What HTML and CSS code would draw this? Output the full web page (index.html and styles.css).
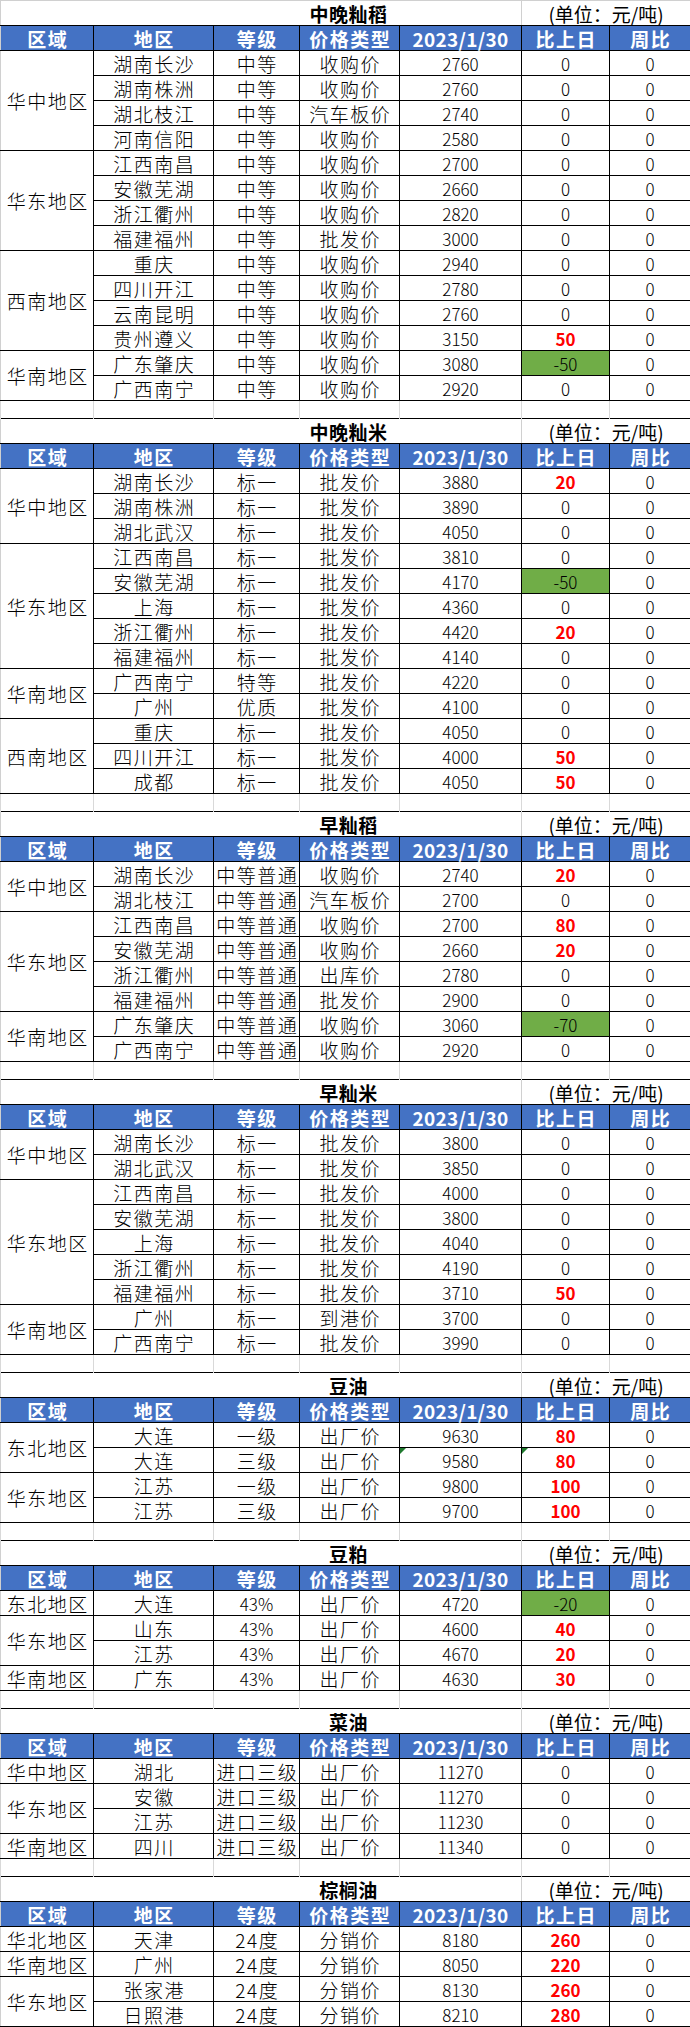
FILE: index.html
```html
<!DOCTYPE html>
<html lang="zh">
<head>
<meta charset="utf-8">
<title>价格表</title>
<link rel="stylesheet" href="styles.css">
</head>
<body>
<table class="sheet">
<colgroup><col class="c1"><col class="c2"><col class="c3"><col class="c4"><col class="c5"><col class="c6"><col class="c7"></colgroup>
<tbody>
<!-- 中晚籼稻 -->
<tr class="ti first"><td colspan="5" class="tt">中晚籼稻</td><td colspan="2" class="unit">(单位：元/吨)</td></tr>
<tr class="hd"><td class="rg">区域</td><td>地区</td><td>等级</td><td>价格类型</td><td class="hn">2023/1/30</td><td>比上日</td><td>周比</td></tr>
<tr class="d"><td rowspan="4" class="rg">华中地区</td><td>湖南长沙</td><td>中等</td><td>收购价</td><td class="n">2760</td><td class="n">0</td><td class="n">0</td></tr>
<tr class="d"><td>湖南株洲</td><td>中等</td><td>收购价</td><td class="n">2760</td><td class="n">0</td><td class="n">0</td></tr>
<tr class="d"><td>湖北枝江</td><td>中等</td><td>汽车板价</td><td class="n">2740</td><td class="n">0</td><td class="n">0</td></tr>
<tr class="d"><td>河南信阳</td><td>中等</td><td>收购价</td><td class="n">2580</td><td class="n">0</td><td class="n">0</td></tr>
<tr class="d"><td rowspan="4" class="rg">华东地区</td><td>江西南昌</td><td>中等</td><td>收购价</td><td class="n">2700</td><td class="n">0</td><td class="n">0</td></tr>
<tr class="d"><td>安徽芜湖</td><td>中等</td><td>收购价</td><td class="n">2660</td><td class="n">0</td><td class="n">0</td></tr>
<tr class="d"><td>浙江衢州</td><td>中等</td><td>收购价</td><td class="n">2820</td><td class="n">0</td><td class="n">0</td></tr>
<tr class="d"><td>福建福州</td><td>中等</td><td>批发价</td><td class="n">3000</td><td class="n">0</td><td class="n">0</td></tr>
<tr class="d"><td rowspan="4" class="rg">西南地区</td><td>重庆</td><td>中等</td><td>收购价</td><td class="n">2940</td><td class="n">0</td><td class="n">0</td></tr>
<tr class="d"><td>四川开江</td><td>中等</td><td>收购价</td><td class="n">2780</td><td class="n">0</td><td class="n">0</td></tr>
<tr class="d"><td>云南昆明</td><td>中等</td><td>收购价</td><td class="n">2760</td><td class="n">0</td><td class="n">0</td></tr>
<tr class="d"><td>贵州遵义</td><td>中等</td><td>收购价</td><td class="n">3150</td><td class="n up">50</td><td class="n">0</td></tr>
<tr class="d"><td rowspan="2" class="rg">华南地区</td><td>广东肇庆</td><td>中等</td><td>收购价</td><td class="n">3080</td><td class="n down">-50</td><td class="n">0</td></tr>
<tr class="d"><td>广西南宁</td><td>中等</td><td>收购价</td><td class="n">2920</td><td class="n">0</td><td class="n">0</td></tr>
<tr class="gap"><td></td><td></td><td></td><td></td><td></td><td></td><td></td></tr>

<!-- 中晚籼米 -->
<tr class="ti"><td colspan="5" class="tt">中晚籼米</td><td colspan="2" class="unit">(单位：元/吨)</td></tr>
<tr class="hd"><td class="rg">区域</td><td>地区</td><td>等级</td><td>价格类型</td><td class="hn">2023/1/30</td><td>比上日</td><td>周比</td></tr>
<tr class="d"><td rowspan="3" class="rg">华中地区</td><td>湖南长沙</td><td>标一</td><td>批发价</td><td class="n">3880</td><td class="n up">20</td><td class="n">0</td></tr>
<tr class="d"><td>湖南株洲</td><td>标一</td><td>批发价</td><td class="n">3890</td><td class="n">0</td><td class="n">0</td></tr>
<tr class="d"><td>湖北武汉</td><td>标一</td><td>批发价</td><td class="n">4050</td><td class="n">0</td><td class="n">0</td></tr>
<tr class="d"><td rowspan="5" class="rg">华东地区</td><td>江西南昌</td><td>标一</td><td>批发价</td><td class="n">3810</td><td class="n">0</td><td class="n">0</td></tr>
<tr class="d"><td>安徽芜湖</td><td>标一</td><td>批发价</td><td class="n">4170</td><td class="n down">-50</td><td class="n">0</td></tr>
<tr class="d"><td>上海</td><td>标一</td><td>批发价</td><td class="n">4360</td><td class="n">0</td><td class="n">0</td></tr>
<tr class="d"><td>浙江衢州</td><td>标一</td><td>批发价</td><td class="n">4420</td><td class="n up">20</td><td class="n">0</td></tr>
<tr class="d"><td>福建福州</td><td>标一</td><td>批发价</td><td class="n">4140</td><td class="n">0</td><td class="n">0</td></tr>
<tr class="d"><td rowspan="2" class="rg">华南地区</td><td>广西南宁</td><td>特等</td><td>批发价</td><td class="n">4220</td><td class="n">0</td><td class="n">0</td></tr>
<tr class="d"><td>广州</td><td>优质</td><td>批发价</td><td class="n">4100</td><td class="n">0</td><td class="n">0</td></tr>
<tr class="d"><td rowspan="3" class="rg">西南地区</td><td>重庆</td><td>标一</td><td>批发价</td><td class="n">4050</td><td class="n">0</td><td class="n">0</td></tr>
<tr class="d"><td>四川开江</td><td>标一</td><td>批发价</td><td class="n">4000</td><td class="n up">50</td><td class="n">0</td></tr>
<tr class="d"><td>成都</td><td>标一</td><td>批发价</td><td class="n">4050</td><td class="n up">50</td><td class="n">0</td></tr>
<tr class="gap"><td></td><td></td><td></td><td></td><td></td><td></td><td></td></tr>

<!-- 早籼稻 -->
<tr class="ti"><td colspan="5" class="tt">早籼稻</td><td colspan="2" class="unit">(单位：元/吨)</td></tr>
<tr class="hd"><td class="rg">区域</td><td>地区</td><td>等级</td><td>价格类型</td><td class="hn">2023/1/30</td><td>比上日</td><td>周比</td></tr>
<tr class="d"><td rowspan="2" class="rg">华中地区</td><td>湖南长沙</td><td>中等普通</td><td>收购价</td><td class="n">2740</td><td class="n up">20</td><td class="n">0</td></tr>
<tr class="d"><td>湖北枝江</td><td>中等普通</td><td>汽车板价</td><td class="n">2700</td><td class="n">0</td><td class="n">0</td></tr>
<tr class="d"><td rowspan="4" class="rg">华东地区</td><td>江西南昌</td><td>中等普通</td><td>收购价</td><td class="n">2700</td><td class="n up">80</td><td class="n">0</td></tr>
<tr class="d"><td>安徽芜湖</td><td>中等普通</td><td>收购价</td><td class="n">2660</td><td class="n up">20</td><td class="n">0</td></tr>
<tr class="d"><td>浙江衢州</td><td>中等普通</td><td>出库价</td><td class="n">2780</td><td class="n">0</td><td class="n">0</td></tr>
<tr class="d"><td>福建福州</td><td>中等普通</td><td>批发价</td><td class="n">2900</td><td class="n">0</td><td class="n">0</td></tr>
<tr class="d"><td rowspan="2" class="rg">华南地区</td><td>广东肇庆</td><td>中等普通</td><td>收购价</td><td class="n">3060</td><td class="n down">-70</td><td class="n">0</td></tr>
<tr class="d"><td>广西南宁</td><td>中等普通</td><td>收购价</td><td class="n">2920</td><td class="n">0</td><td class="n">0</td></tr>
<tr class="gap"><td></td><td></td><td></td><td></td><td></td><td></td><td></td></tr>

<!-- 早籼米 -->
<tr class="ti"><td colspan="5" class="tt">早籼米</td><td colspan="2" class="unit">(单位：元/吨)</td></tr>
<tr class="hd"><td class="rg">区域</td><td>地区</td><td>等级</td><td>价格类型</td><td class="hn">2023/1/30</td><td>比上日</td><td>周比</td></tr>
<tr class="d"><td rowspan="2" class="rg">华中地区</td><td>湖南长沙</td><td>标一</td><td>批发价</td><td class="n">3800</td><td class="n">0</td><td class="n">0</td></tr>
<tr class="d"><td>湖北武汉</td><td>标一</td><td>批发价</td><td class="n">3850</td><td class="n">0</td><td class="n">0</td></tr>
<tr class="d"><td rowspan="5" class="rg">华东地区</td><td>江西南昌</td><td>标一</td><td>批发价</td><td class="n">4000</td><td class="n">0</td><td class="n">0</td></tr>
<tr class="d"><td>安徽芜湖</td><td>标一</td><td>批发价</td><td class="n">3800</td><td class="n">0</td><td class="n">0</td></tr>
<tr class="d"><td>上海</td><td>标一</td><td>批发价</td><td class="n">4040</td><td class="n">0</td><td class="n">0</td></tr>
<tr class="d"><td>浙江衢州</td><td>标一</td><td>批发价</td><td class="n">4190</td><td class="n">0</td><td class="n">0</td></tr>
<tr class="d"><td>福建福州</td><td>标一</td><td>批发价</td><td class="n">3710</td><td class="n up">50</td><td class="n">0</td></tr>
<tr class="d"><td rowspan="2" class="rg">华南地区</td><td>广州</td><td>标一</td><td>到港价</td><td class="n">3700</td><td class="n">0</td><td class="n">0</td></tr>
<tr class="d"><td>广西南宁</td><td>标一</td><td>批发价</td><td class="n">3990</td><td class="n">0</td><td class="n">0</td></tr>
<tr class="gap"><td></td><td></td><td></td><td></td><td></td><td></td><td></td></tr>

<!-- 豆油 -->
<tr class="ti"><td colspan="5" class="tt">豆油</td><td colspan="2" class="unit">(单位：元/吨)</td></tr>
<tr class="hd"><td class="rg">区域</td><td>地区</td><td>等级</td><td>价格类型</td><td class="hn">2023/1/30</td><td>比上日</td><td>周比</td></tr>
<tr class="d"><td rowspan="2" class="rg">东北地区</td><td>大连</td><td>一级</td><td>出厂价</td><td class="n">9630</td><td class="n up">80</td><td class="n">0</td></tr>
<tr class="d"><td>大连</td><td>三级</td><td>出厂价</td><td class="n flag">9580</td><td class="n up flag">80</td><td class="n">0</td></tr>
<tr class="d"><td rowspan="2" class="rg">华东地区</td><td>江苏</td><td>一级</td><td>出厂价</td><td class="n">9800</td><td class="n up">100</td><td class="n">0</td></tr>
<tr class="d"><td>江苏</td><td>三级</td><td>出厂价</td><td class="n">9700</td><td class="n up">100</td><td class="n">0</td></tr>
<tr class="gap"><td></td><td></td><td></td><td></td><td></td><td></td><td></td></tr>

<!-- 豆粕 -->
<tr class="ti"><td colspan="5" class="tt">豆粕</td><td colspan="2" class="unit">(单位：元/吨)</td></tr>
<tr class="hd"><td class="rg">区域</td><td>地区</td><td>等级</td><td>价格类型</td><td class="hn">2023/1/30</td><td>比上日</td><td>周比</td></tr>
<tr class="d"><td class="rg">东北地区</td><td>大连</td><td class="n">43%</td><td>出厂价</td><td class="n">4720</td><td class="n down">-20</td><td class="n">0</td></tr>
<tr class="d"><td rowspan="2" class="rg">华东地区</td><td>山东</td><td class="n">43%</td><td>出厂价</td><td class="n">4600</td><td class="n up">40</td><td class="n">0</td></tr>
<tr class="d"><td>江苏</td><td class="n">43%</td><td>出厂价</td><td class="n">4670</td><td class="n up">20</td><td class="n">0</td></tr>
<tr class="d"><td class="rg">华南地区</td><td>广东</td><td class="n">43%</td><td>出厂价</td><td class="n">4630</td><td class="n up">30</td><td class="n">0</td></tr>
<tr class="gap"><td></td><td></td><td></td><td></td><td></td><td></td><td></td></tr>

<!-- 菜油 -->
<tr class="ti"><td colspan="5" class="tt">菜油</td><td colspan="2" class="unit">(单位：元/吨)</td></tr>
<tr class="hd"><td class="rg">区域</td><td>地区</td><td>等级</td><td>价格类型</td><td class="hn">2023/1/30</td><td>比上日</td><td>周比</td></tr>
<tr class="d"><td class="rg">华中地区</td><td>湖北</td><td>进口三级</td><td>出厂价</td><td class="n">11270</td><td class="n">0</td><td class="n">0</td></tr>
<tr class="d"><td rowspan="2" class="rg">华东地区</td><td>安徽</td><td>进口三级</td><td>出厂价</td><td class="n">11270</td><td class="n">0</td><td class="n">0</td></tr>
<tr class="d"><td>江苏</td><td>进口三级</td><td>出厂价</td><td class="n">11230</td><td class="n">0</td><td class="n">0</td></tr>
<tr class="d"><td class="rg">华南地区</td><td>四川</td><td>进口三级</td><td>出厂价</td><td class="n">11340</td><td class="n">0</td><td class="n">0</td></tr>
<tr class="gap"><td></td><td></td><td></td><td></td><td></td><td></td><td></td></tr>

<!-- 棕榈油 -->
<tr class="ti"><td colspan="5" class="tt">棕榈油</td><td colspan="2" class="unit">(单位：元/吨)</td></tr>
<tr class="hd"><td class="rg">区域</td><td>地区</td><td>等级</td><td>价格类型</td><td class="hn">2023/1/30</td><td>比上日</td><td>周比</td></tr>
<tr class="d"><td class="rg">华北地区</td><td>天津</td><td>24度</td><td>分销价</td><td class="n">8180</td><td class="n up">260</td><td class="n">0</td></tr>
<tr class="d"><td class="rg">华南地区</td><td>广州</td><td>24度</td><td>分销价</td><td class="n">8050</td><td class="n up">220</td><td class="n">0</td></tr>
<tr class="d"><td rowspan="2" class="rg">华东地区</td><td>张家港</td><td>24度</td><td>分销价</td><td class="n">8130</td><td class="n up">260</td><td class="n">0</td></tr>
<tr class="d"><td>日照港</td><td>24度</td><td>分销价</td><td class="n">8210</td><td class="n up">280</td><td class="n">0</td></tr>
</tbody>
</table>
</body>
</html>
```

FILE: styles.css
```css
html, body {
  margin: 0;
  padding: 0;
  background: #ffffff;
}

body {
  font-family: "Noto Sans CJK SC", "Noto Sans", sans-serif;
  color: #000000;
}

.sheet {
  border-collapse: collapse;
  table-layout: fixed;
  width: 690px;
}

.c1 { width: 93px; }
.c2 { width: 120px; }
.c3 { width: 86px; }
.c4 { width: 100px; }
.c5 { width: 122px; }
.c6 { width: 88px; }
.c7 { width: 81px; }

.sheet td {
  padding: 0 0 0 1.5px;
  text-align: center;
  vertical-align: middle;
  font-size: 19px;
  letter-spacing: 1.5px;
  line-height: 1;
  font-weight: 300;
  white-space: nowrap;
  border: 1px solid #000000;
}

.sheet td.rg {
  border-left-color: #d0d0d0;
}

.d { height: 25px; }
.hd { height: 25px; }
.ti { height: 25px; }
.gap { height: 18px; }

.ti td {
  border-left-color: #d0d0d0;
  border-right-color: #d0d0d0;
}

.first td {
  border-top-color: #d0d0d0;
}

.sheet td.tt {
  font-weight: 700;
  letter-spacing: 0.5px;
  padding-left: 175px;
}

.sheet td.unit {
  font-weight: 400;
  letter-spacing: 0;
  padding-left: 0;
}

.hd td {
  background: #4472c4;
  color: #ffffff;
  font-weight: 700;
}

.sheet td.hn {
  letter-spacing: 0.3px;
  padding-left: 0;
}

.gap td {
  border-top: none;
  border-bottom: none;
  border-left: 1px solid #d9d9d9;
  border-right: 1px solid #d9d9d9;
}

.sheet td.n {
  font-size: 17px;
  letter-spacing: 0;
  padding-left: 0;
}

.sheet td.up {
  color: #ff0000;
  font-weight: 700;
}

.sheet td.down {
  background: #70ad47;
}

.sheet td.flag {
  position: relative;
}

.sheet td.flag::before {
  content: "";
  position: absolute;
  left: 0;
  top: 0;
  border-top: 6px solid #1f7a2e;
  border-right: 6px solid transparent;
}
```
